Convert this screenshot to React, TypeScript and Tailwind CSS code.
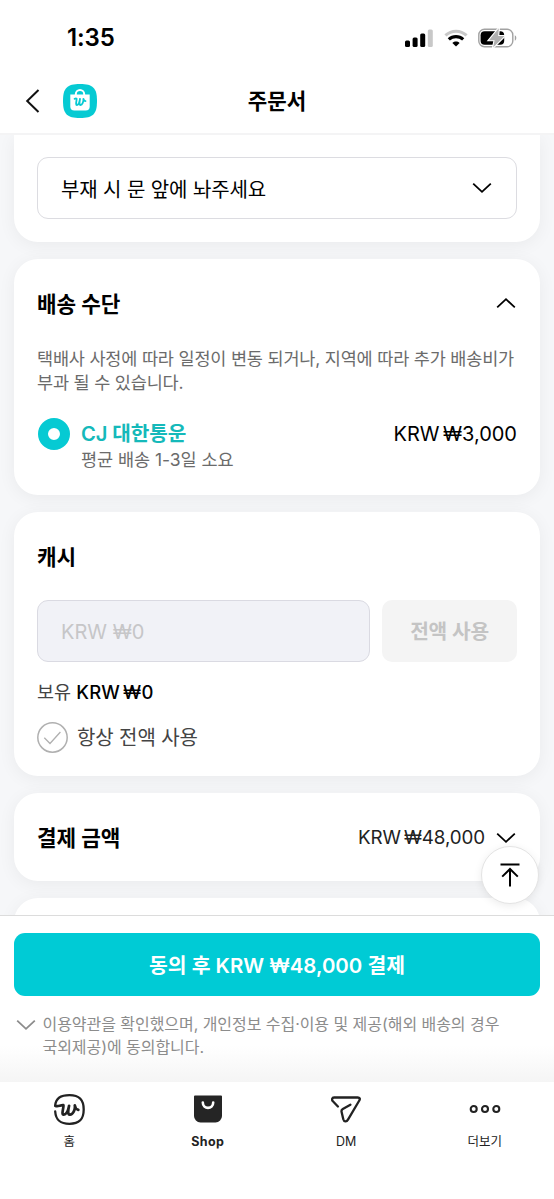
import type { ReactNode } from "react";
import clsx from "clsx";

type ChevronProps = {
  direction?: "down" | "up";
  className?: string;
};

const Chevron = ({ direction = "down", className }: ChevronProps) => (
  <svg
    width="20"
    height="12"
    viewBox="0 0 20 12"
    fill="none"
    stroke="currentColor"
    strokeWidth="1.8"
    className={clsx("shrink-0", className)}
  >
    <path d={direction === "down" ? "M1.2 1.6 10 9.8l8.8-8.2" : "M1.2 10.4 10 2.2l8.8 8.2"} />
  </svg>
);

const StatusBar = () => (
  <div className="flex h-[67px] items-center justify-between pt-[8px] pr-[36px] pl-[67px]">
    <span className="text-[24px] leading-none font-semibold tracking-[-0.1px]">1:35</span>
    <div className="flex items-center">
      {/* Cellular */}
      <svg width="28" height="18" viewBox="0 0 28 18" className="mr-[10.5px]">
        <rect x="0" y="11.5" width="5" height="6.5" rx="1.5" />
        <rect x="7.6" y="8.5" width="5" height="9.5" rx="1.5" />
        <rect x="15.2" y="4.5" width="5" height="13.5" rx="1.5" />
        <rect x="22.8" y="0.5" width="5" height="17.5" rx="1.5" fill="#c8c8c8" />
      </svg>
      {/* Wifi */}
      <svg width="24" height="18" viewBox="0 0 24 18" fill="none" className="mr-[10.5px]">
        <path d="M1.4 6.4C7.5.7 16.5.7 22.6 6.4" stroke="#c8c8c8" strokeWidth="3" />
        <path d="M4.8 10.4c4.2-3.8 10.2-3.8 14.4 0" stroke="#000" strokeWidth="3.2" />
        <path d="M8.4 14c2.100-1.900 5.100-1.900 7.200 0L12 17.600z" fill="#000" />
      </svg>
      {/* Battery, charging */}
      <svg width="40" height="20" viewBox="0 0 40 20" fill="none">
        <rect x="0.8" y="1.3" width="34" height="17.4" rx="5.6" stroke="#a2a2a2" strokeWidth="1.4" />
        <path d="M36.8 7.3c2 .8 2 4.6 0 5.4z" fill="#a2a2a2" />
        <rect x="2.6" y="3.200" width="23.600" height="13.600" rx="4" fill="#000" />
        <path
          d="M20.8.3 11 12.200h5.600l-1.500 7.300L26.500 8h-6.300z"
          fill="#b0b0b0"
          stroke="#fff"
          strokeWidth="2.2"
          paintOrder="stroke"
        />
      </svg>
    </div>
  </div>
);

const Header = () => (
  <header className="grid h-[68px] grid-cols-[1fr_auto_1fr] items-center border-b-2 border-[#f4f4f5] px-[25px] pt-[1px]">
    <div className="flex items-center gap-[22px]">
      <svg width="16" height="26" viewBox="0 0 16 26" fill="none" stroke="#111" strokeWidth="2">
        <path d="M13.5 2 2.2 13l11.3 11" />
      </svg>
      <svg width="34" height="34" viewBox="0 0 34 34" fill="none">
        <path d="M17 0c13 0 17 4 17 17s-4 17-17 17S0 30 0 17 4 0 17 0z" fill="#06cad3" />
        <path d="M12.800 11v-.8a4.200 4.200 0 0 1 8.400 0v.8" stroke="#fff" strokeWidth="2" />
        <path d="M7.300 10.400h19.400v12.200a4 4 0 0 1-4 4H11.300a4 4 0 0 1-4-4z" fill="#fff" />
        <path
          d="M11.600 14.800c.8-.4 1.600-.5 2-.1.400 1-1.500 6.200.3 6.300 1.600 0 2.700-3.400 3.100-6-.4 2-1 5.900.4 6 2 .1 3.300-3.600 3-6.200.3 1.400 1 2.300 2.100 2.400"
          stroke="#06cad3"
          strokeWidth="1.8"
          strokeLinecap="round"
          strokeLinejoin="round"
        />
      </svg>
    </div>
    <h1 className="pt-[2px] text-[21.2px] leading-none font-bold">주문서</h1>
  </header>
);

type CardProps = {
  children?: ReactNode;
  className?: string;
};

const Card = ({ children, className }: CardProps) => (
  <section
    className={clsx(
      "shrink-0 rounded-[24px] bg-white px-[23px] shadow-[0_3px_18px_rgba(0,0,0,0.055)]",
      className
    )}
  >
    {children}
  </section>
);

const DeliveryRequest = () => (
  <Card className="h-[107px] rounded-t-none pt-[22px]">
    <button className="flex h-[62px] w-full items-center justify-between rounded-[11px] border-[1.5px] border-[#dcdce1] pr-[24px] pl-[23px]">
      <span className="pt-[3px] text-[20px] tracking-[-0.1px]">부재 시 문 앞에 놔주세요</span>
      <Chevron />
    </button>
  </Card>
);

const DeliveryMethod = () => (
  <Card className="h-[236px] pt-[30px]">
    <div className="flex h-[28px] items-center justify-between">
      <h2 className="pt-[3px] text-[21.3px] font-bold">배송 수단</h2>
      <Chevron direction="up" className="mr-[1px]" />
    </div>
    <p className="mt-[30px] text-[17.5px] leading-[24px] tracking-[-0.19px] whitespace-nowrap text-[#6b6b6b]">
      택배사 사정에 따라 일정이 변동 되거나, 지역에 따라 추가 배송비가
      <br />
      부과 될 수 있습니다.
    </p>
    <div className="mt-[24px] flex items-start">
      <span className="-mt-px ml-[1px] size-[32px] shrink-0 rounded-full border-[10px] border-[#06cad3]" />
      <div className="ml-[11px] grow">
        <div className="flex h-[30px] items-center justify-between">
          <span className="text-[20.2px] font-semibold tracking-[-0.1px] text-[#15b9ba]">
            CJ 대한통운
          </span>
          <span className="text-[20px] [word-spacing:-2.2px]">KRW ₩3,000</span>
        </div>
        <p className="-mt-px text-[17.5px] leading-[24px] tracking-[-0.05px] text-[#6b6b6b]">
          평균 배송 1-3일 소요
        </p>
      </div>
    </div>
  </Card>
);

const Cash = () => (
  <Card className="h-[264px] pt-[31px]">
    <h2 className="h-[28px] text-[21.3px] leading-[28px] font-bold">캐시</h2>
    <div className="mt-[29px] flex h-[62px] gap-[12px]">
      <div className="flex grow items-center rounded-[11px] border-[1.5px] border-[#dadae2] bg-[#f1f2f7] pt-[2px] pl-[23px] text-[20px] text-[#c6c6c8]">
        KRW ₩0
      </div>
      <button className="w-[135px] rounded-[10px] bg-[#f4f4f4] pt-[3px] text-[20.3px] font-semibold tracking-[-0.2px] text-[#c4c4c4]">
        전액 사용
      </button>
    </div>
    <p className="mt-[17px] text-[18.5px] leading-[26px] text-[#444]">
      보유{" "}
      <span className="font-medium tracking-[0.2px] text-black [word-spacing:-2.2px]">KRW ₩0</span>
    </p>
    <div className="mt-[17px] flex items-center gap-[9px]">
      <svg width="31" height="31" viewBox="0 0 31 31" fill="none" stroke="#b0b0b0">
        <circle cx="15.5" cy="15.5" r="14.7" strokeWidth="1.5" />
        <path d="m7.3 15.7 5.7 5.8L23.4 10" strokeWidth="1.3" />
      </svg>
      <span className="pt-px text-[20px] leading-[30px] tracking-[-0.1px] text-[#444]">
        항상 전액 사용
      </span>
    </div>
  </Card>
);

const PaymentAmount = () => (
  <Card className="flex h-[88px] items-center justify-between pt-px">
    <h2 className="pt-[2px] text-[21.3px] font-bold">결제 금액</h2>
    <div className="mr-[1px] flex items-center gap-[11px]">
      <span className="pt-[2px] text-[18.8px] tracking-[-0.1px] text-[#222] [word-spacing:-2px]">
        KRW ₩48,000
      </span>
      <Chevron />
    </div>
  </Card>
);

const Checkout = () => (
  <div className="h-[167px] border-t border-[#dcdcdc] bg-linear-to-b from-white from-78% to-[#f5f5f5] px-[14px] pt-[17px]">
    <button className="h-[63px] w-full rounded-[11px] bg-[#00cbd5] pt-[3px] text-[20.4px] font-semibold text-white">
      동의 후 KRW ₩48,000 결제
    </button>
    <div className="mt-[17px] flex items-start gap-[6.5px] pl-[2px] text-[#8c8c8c]">
      <Chevron className="mt-[6px]" />
      <p className="text-[16px] leading-[23px] tracking-[-0.05px] whitespace-nowrap">
        이용약관을 확인했으며, 개인정보 수집·이용 및 제공(해외 배송의 경우
        <br />
        국외제공)에 동의합니다.
      </p>
    </div>
  </div>
);

const HomeIcon = () => (
  <svg
    width="31"
    height="31"
    viewBox="0 0 31 31"
    fill="none"
    stroke="#222"
    strokeWidth="2.3"
    strokeLinecap="round"
    strokeLinejoin="round"
  >
    <path d="M1.2 17.5C1.8 26 6 29.8 15.5 29.8c9.800 0 14.200-4.300 14.200-14.300S25.300 1.200 15.500 1.200C6.500 1.200 1.700 4.700 1.200 11.600" />
    <path
      strokeWidth="2.7"
      d="M1.4 11.800c2.300 1.400 4.900-.9 8-.6.600 2.500-2.500 9.300.3 9.500 2.600.1 4.600-4.800 5.400-8.900-.8 3.400-1.800 8.700.7 8.900 3.200.2 5.600-5 5-9.300.4 2.500 1.700 4 3.500 4.500"
    />
  </svg>
);

const ShopIcon = () => (
  <svg width="28" height="28" viewBox="0 0 28 28" fill="none">
    <path
      d="M1 .5h26a1 1 0 0 1 1 1V21a6.500 6.500 0 0 1-6.500 6.500h-15A6.500 6.500 0 0 1 0 21V1.500a1 1 0 0 1 1-1z"
      fill="#252525"
    />
    <path d="M8.800 7.500c0 7.200 10.400 7.200 10.400 0" stroke="#fff" strokeWidth="2.6" strokeLinecap="round" />
  </svg>
);

const DmIcon = () => (
  <svg
    width="30"
    height="28"
    viewBox="0 0 30 28"
    fill="none"
    stroke="#222"
    strokeWidth="2.3"
    strokeLinecap="round"
    strokeLinejoin="round"
  >
    <path d="M6.900 11.500 1.900 6.300C.4 4.500 1 2.500 3.100 2.500h23.600c2 0 2.700 1.400 1.600 3L17 24.700c-1.400 2.400-4 2.100-4.700-.5L10.600 17c-.4-1.600 0-2.400 1.200-3.100l7.600-4.200" />
  </svg>
);

const MoreIcon = () => (
  <svg width="32" height="10" viewBox="0 0 32 10" fill="none" stroke="#222" strokeWidth="2.1">
    <circle cx="4.7" cy="5" r="3" />
    <circle cx="16" cy="5" r="3" />
    <circle cx="27.3" cy="5" r="3" />
  </svg>
);

const navItems = [
  { label: "홈", icon: <HomeIcon />, active: false },
  { label: "Shop", icon: <ShopIcon />, active: true },
  { label: "DM", icon: <DmIcon />, active: false },
  { label: "더보기", icon: <MoreIcon />, active: false },
];

const BottomNav = () => (
  <nav className="grid h-[117px] grid-cols-4 bg-white pt-[11px]">
    {navItems.map((item) => (
      <div key={item.label} className="flex flex-col items-center">
        <div className="flex h-[32px] items-center">{item.icon}</div>
        <span
          className={clsx(
            "mt-[8px] text-[12.5px] leading-[18px] text-[#222]",
            item.active && "font-bold tracking-[0.4px]"
          )}
        >
          {item.label}
        </span>
      </div>
    ))}
  </nav>
);

export default function App() {
  return (
    <div className="relative flex h-[1199px] w-[554px] flex-col overflow-hidden bg-white font-[Inter,'Noto_Sans_CJK_KR',sans-serif] text-black">
      <StatusBar />
      <Header />
      <main className="flex min-h-0 flex-1 flex-col gap-[17px] overflow-hidden bg-[#f6f7f9] px-[14px]">
        <DeliveryRequest />
        <DeliveryMethod />
        <Cash />
        <PaymentAmount />
        <Card className="h-[100px]" />
      </main>
      <Checkout />
      <BottomNav />

      {/* Scroll to top */}
      <button className="absolute top-[846px] left-[481px] flex size-[58px] items-center justify-center rounded-full border border-[#e4e4e4] bg-white shadow-[0_2px_8px_rgba(0,0,0,0.08)]">
        <svg width="20" height="24" viewBox="0 0 20 24" fill="none" stroke="#000" strokeWidth="2">
          <path d="M.5 1.5h19M10 23.500V6M2.200 13.600 10 6l7.800 7.600" />
        </svg>
      </button>
    </div>
  );
}
